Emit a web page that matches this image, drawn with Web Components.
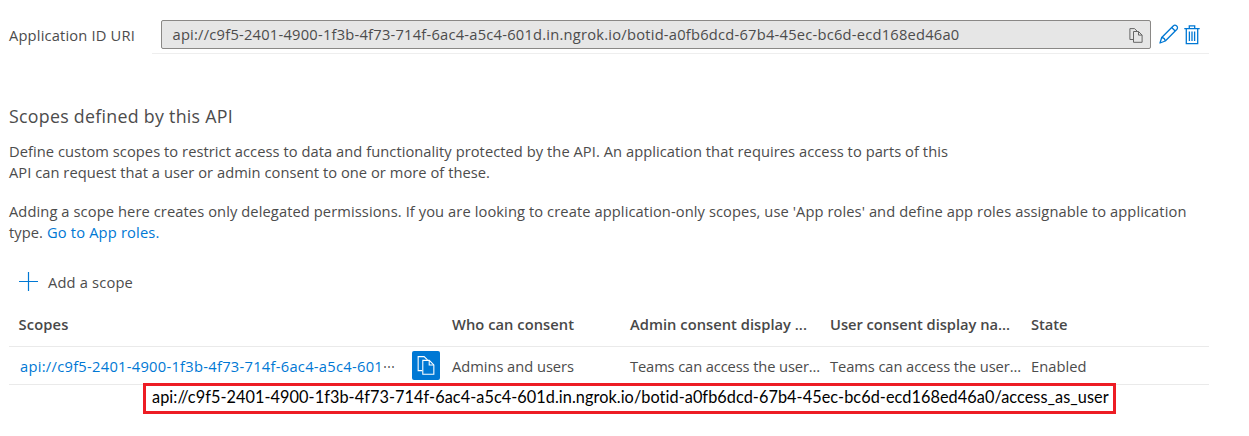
<!DOCTYPE html>
<html lang="en">
<head>
<meta charset="utf-8">
<title>Expose an API</title>
<style>
body{margin:0;background:#fff;color:#4c4c4c;font:400 14.7px/21px "Open Sans","Noto Sans",sans-serif}
</style>
</head>
<body>
<api-page></api-page>
<script>
const define = (name, html, connect) => {
  const t = document.createElement('template');
  t.innerHTML = html;
  customElements.define(name, class extends HTMLElement {
    constructor(){ super(); this.attachShadow({mode:'open'}).append(t.content.cloneNode(true)); }
    connectedCallback(){ if (connect) connect(this); }
  });
};

// Single text run whose tracking is adjusted to fill a given measure.
define('text-run', `<style>:host{display:inline-block;white-space:pre;vertical-align:top}span{display:inline-block}</style><span><slot></slot></span>`, el => {
  const w = +el.getAttribute('w'), s = el.shadowRoot.querySelector('span');
  const n = el.textContent.length;
  const natural = s.getBoundingClientRect().width;
  s.style.letterSpacing = ((w - natural) / n) + 'px';
  el.style.width = w + 'px';
});

define('copy-icon', `<style>:host{display:block;width:14px;height:15px}svg{display:block;width:100%;height:100%}</style>
<svg viewBox="0 0 14 15" fill="none" stroke="currentColor" stroke-width="var(--sw,1)"><path d="M4 11.5H.9V.6H5.5L8.2 3.2"/><path d="M4.5 3.5h5l3.6 3.6v7.2H4.5z"/><path d="M9.5 3.5v3.6h3.6"/></svg>`);
define('pencil-icon', `<style>:host{display:block;width:20px;height:20px;color:#0078d4}svg{display:block}</style>
<svg width="20" height="20" viewBox="0 0 20 20" fill="none" stroke="currentColor" stroke-width="1.3" stroke-linejoin="round"><path d="M1 19l1.700-5.500L14.2 2c1-1 2.400-1 3.500 0s1 2.400 0 3.500L6.300 17z"/><path d="M2.700 13.500c2 .2 3.300 1.500 3.600 3.500M12.700 3.500l3.500 3.500"/></svg>`);
define('trash-icon', `<style>:host{display:block;width:16px;height:20px;color:#0078d4}svg{display:block}</style>
<svg width="16" height="20" viewBox="0 0 16 20" fill="none" stroke="currentColor" stroke-width="1.3"><path d="M.3 3.600h15.400M5.300 3.500V.9h5.400v2.600M2.300 4v14.700h11.400V4M5.400 6.500v9.500M8 6.500v9.500M10.600 6.500v9.500"/></svg>`);
define('plus-icon', `<style>:host{display:block;width:19px;height:19px;color:#0078d4}svg{display:block}</style>
<svg width="19" height="19" viewBox="0 0 19 19" stroke="currentColor" stroke-width="1.2"><path d="M0 9.500h19M9.500 0v19"/></svg>`);

define('uri-field', `<style>
:host{display:flex;padding:20px 40px 0 9px;height:54px;box-sizing:border-box}
.label{width:143px;padding-top:5px}
.value{flex:1;display:flex;padding-left:9px;border-bottom:1px solid #eee}
.box{box-sizing:border-box;width:990px;height:29px;border:1px solid #8a8886;border-radius:2px;background:#e6e6e6;display:flex;justify-content:space-between;padding:3px 7px 0 10.500px}
copy-icon{color:#666;margin-top:4px}
pencil-icon{margin:4px 0 0 8px}trash-icon{margin:5px 0 0 5px}
</style>
<div class="label"><text-run w="126">Application ID URI</text-run></div>
<div class="value"><div class="box"><text-run w="787">api://</text-run><copy-icon></copy-icon></div><pencil-icon></pencil-icon><trash-icon></trash-icon></div>`, el => {
  const r = el.shadowRoot.querySelector('.box text-run');
  r.shadowRoot.querySelector('span').style.letterSpacing = '';
  r.textContent = el.getAttribute('value');
  r.connectedCallback();
});

define('scope-intro', `<style>
:host{display:block;padding:50px 0 0 9px}
h2{margin:0 0 13px;font-size:17.800px;line-height:24px;font-weight:400}
p{margin:0 0 18px}p>text-run{display:block}
a{color:#0078d4;text-decoration:none}
.last{display:flex;gap:4px}
</style>
<h2><text-run w="224">Scopes defined by this API</text-run></h2>
<p><text-run w="939">Define custom scopes to restrict access to data and functionality protected by the API. An application that requires access to parts of this</text-run><text-run w="481">API can request that a user or admin consent to one or more of these.</text-run></p>
<p><text-run w="1177.500">Adding a scope here creates only delegated permissions. If you are looking to create application-only scopes, use 'App roles' and define app roles assignable to application</text-run><span class="last"><text-run w="34">type.</text-run><a><text-run w="112.500">Go to App roles.</text-run></a></span></p>`);

define('add-scope', `<style>:host{display:flex;align-items:center;gap:10px;padding:11px 0 0 19px;height:21px}plus-icon{margin-top:-2px}</style><plus-icon></plus-icon><text-run w="85">Add a scope</text-run>`);

define('scope-table', `<style>
:host{display:block;width:1200px;margin:11px 0 0 9px}
.row{display:grid;grid-template-columns:443px 178px 200px 201px 1fr;box-sizing:border-box;border-bottom:1px solid #eaeaea}
.head{height:43px;padding-top:10px;font-weight:600;color:#484848}
.body{height:38px;padding-top:9px}
.head>:first-child{margin-left:9.500px}
.first{display:flex;padding-left:11px}
.first a{color:#0078d4}
.dots{font-size:12px;margin-right:1px}
.copy{box-sizing:border-box;width:28px;height:29px;margin:-5px 0 0 17px;background:#0078d4;border-radius:2px;color:#fff;padding:4px 5px}
.copy copy-icon{width:18px;height:21px;--sw:.85}
</style>
<div class="row head"><text-run w="50">Scopes</text-run><text-run w="122">Who can consent</text-run><text-run w="177">Admin consent display ...</text-run><text-run w="180">User consent display na...</text-run><text-run w="36.500">State</text-run></div>
<div class="row body"><div class="first"><a><text-run w="363">api://c9f5-2401-4900-1f3b-4f73-714f-6ac4-a5c4-601</text-run></a><text-run class="dots" w="11">⋯</text-run><div class="copy"><copy-icon></copy-icon></div></div><text-run w="122">Admins and users</text-run><text-run w="190">Teams can access the user...</text-run><text-run w="191">Teams can access the user...</text-run><text-run w="55.500">Enabled</text-run></div>`);

define('scope-callout', `<style>:host{position:absolute;left:143px;top:383px;box-sizing:border-box;width:973px;height:31px;border:3px solid #ed1c24;background:#fff;color:#000;font:400 16.300px/22px Lato,sans-serif;padding-left:6px}</style><text-run w="957">api://c9f5-2401-4900-1f3b-4f73-714f-6ac4-a5c4-601d.in.ngrok.io/botid-a0fb6dcd-67b4-45ec-bc6d-ecd168ed46a0/access_as_user</text-run>`);

define('api-page', `<style>:host{display:block;position:relative;width:1249px;height:436px;overflow:hidden;background:#fff}</style>
<uri-field value="api://c9f5-2401-4900-1f3b-4f73-714f-6ac4-a5c4-601d.in.ngrok.io/botid-a0fb6dcd-67b4-45ec-bc6d-ecd168ed46a0"></uri-field>
<scope-intro></scope-intro>
<add-scope></add-scope>
<scope-table></scope-table>
<scope-callout></scope-callout>`);
</script>
</body>
</html>
